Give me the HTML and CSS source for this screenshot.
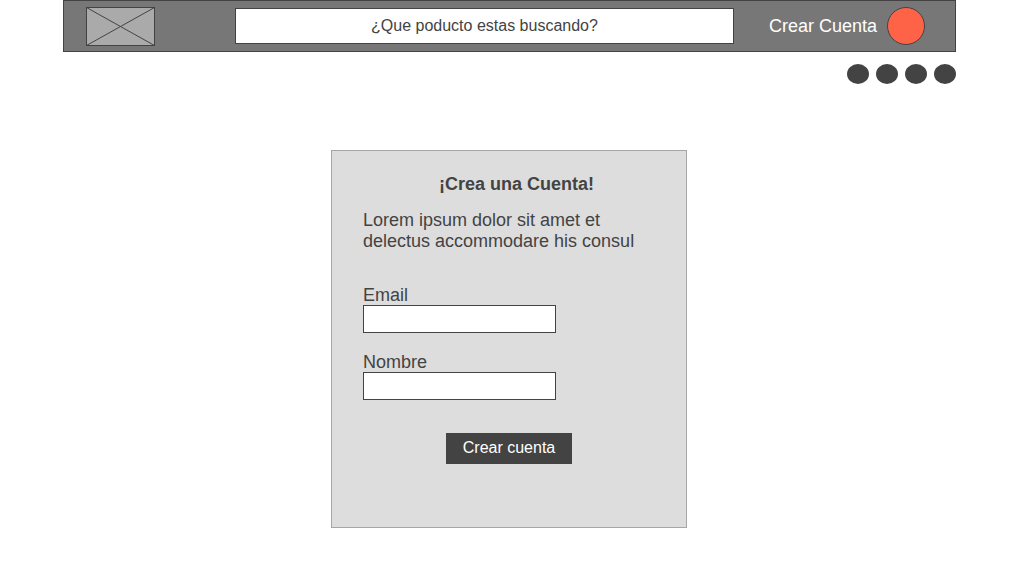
FILE: index.html
```html
<!DOCTYPE html>
<html lang="es">
<head>
<meta charset="utf-8">
<meta name="viewport" content="width=device-width, initial-scale=1">
<title>Crear Cuenta</title>
<link rel="stylesheet" href="styles.css">
</head>
<body>
<header class="page-header">
  <div class="topbar">
    <svg class="logo" viewBox="0 0 69 39" preserveAspectRatio="none" aria-hidden="true">
      <rect x="0.5" y="0.5" width="68" height="38" fill="#aaaaaa" stroke="#434343"/>
      <path d="M0.5 0.5L68.5 38.5M68.5 0.5L0.5 38.5" fill="none" stroke="#434343"/>
    </svg>
    <input class="search" type="text" placeholder="¿Que poducto estas buscando?" aria-label="¿Que poducto estas buscando?">
    <a class="account" href="#registro">Crear Cuenta<span class="avatar"></span></a>
  </div>
  <nav class="dots">
    <a class="dot" href="#"></a>
    <a class="dot" href="#"></a>
    <a class="dot" href="#"></a>
    <a class="dot" href="#"></a>
  </nav>
</header>
<main class="content">
  <form class="card" id="registro">
    <h1 class="title">¡Crea una Cuenta!</h1>
    <p class="intro">Lorem ipsum dolor sit amet et delectus accommodare his consul</p>
    <div class="field">
      <label class="label" for="email">Email</label>
      <input class="text-box" type="email" id="email">
    </div>
    <div class="field">
      <label class="label" for="nombre">Nombre</label>
      <input class="text-box" type="text" id="nombre">
    </div>
    <button class="submit" type="submit">Crear cuenta</button>
  </form>
</main>
</body>
</html>
```

FILE: styles.css
```css
* {
  box-sizing: border-box;
}

body {
  margin: 0;
  background: #ffffff;
  color: #434343;
  font: 18px/21px "Liberation Sans", Arial, sans-serif;
}

.page-header {
  padding: 0 68px 0 63px;
}

.topbar {
  display: flex;
  align-items: center;
  min-height: 52px;
  padding: 0 30px 0 22px;
  background: #777777;
  border: 1px solid #434343;
}

.logo {
  flex: none;
  width: 69px;
  height: 39px;
}

.search {
  flex: 1;
  min-width: 0;
  height: 36px;
  margin: 0 35px 0 80px;
  padding: 0;
  background: #ffffff;
  border: 1px solid #434343;
  border-radius: 0;
  color: #434343;
  font: inherit;
  font-size: 16px;
  text-align: center;
}

.search::placeholder {
  color: #434343;
  opacity: 1;
}

.account {
  display: flex;
  align-items: center;
  gap: 10px;
  color: #ffffff;
  text-decoration: none;
  white-space: nowrap;
}

.avatar {
  width: 38px;
  height: 38px;
  background: #ff6347;
  border: 1px solid #434343;
  border-radius: 50%;
}

.dots {
  display: flex;
  justify-content: flex-end;
  gap: 7px;
  padding-top: 12px;
}

.dot {
  width: 22px;
  height: 20px;
  background: #434343;
  border-radius: 50%;
}

.content {
  display: flex;
  justify-content: center;
  padding: 66px 69px 46px 63px;
}

.card {
  display: flex;
  flex-direction: column;
  width: 100%;
  max-width: 356px;
  padding: 23px 31px 63px;
  background: #dddddd;
  border: 1px solid #a6a6a6;
}

.title {
  margin: 0 0 15px;
  padding-left: 15px;
  font-size: 18px;
  text-align: center;
}

.intro {
  margin: 0 0 33px;
}

.field {
  display: flex;
  flex-direction: column;
}

.field + .field {
  margin-top: 19px;
}

.label {
  line-height: 20px;
}

.text-box {
  width: 193px;
  max-width: 100%;
  height: 28px;
  padding: 0 8px;
  background: #ffffff;
  border: 1px solid #434343;
  border-radius: 0;
  color: #434343;
  font: inherit;
  font-size: 16px;
}

.submit {
  align-self: center;
  margin: 33px 0 0;
  padding: 4px 17px 6px;
  background: #434343;
  border: 0;
  color: #ffffff;
  font: inherit;
  font-size: 16px;
}
```
